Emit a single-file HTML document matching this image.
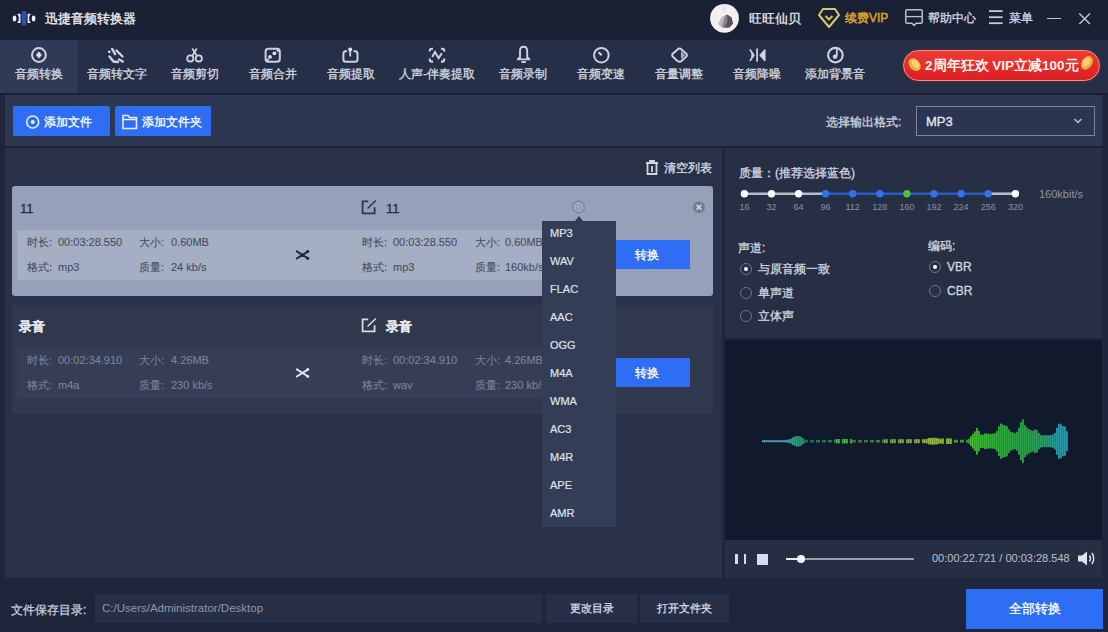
<!DOCTYPE html>
<html><head><meta charset="utf-8">
<style>
*{margin:0;padding:0;box-sizing:border-box}
html,body{width:1108px;height:632px;overflow:hidden;background:#1f263b;font-family:"Liberation Sans",sans-serif;}
.a{position:absolute}
.t{position:absolute;white-space:nowrap;line-height:1;-webkit-text-stroke-width:0.3px}
svg{position:absolute;overflow:visible}
.tab{position:absolute;top:40px;height:53px}
.tab .lbl{position:absolute;left:-10px;right:-10px;top:68px;-webkit-text-stroke:0.35px #d0d4de;text-align:center;font-size:12px;color:#d0d4de;line-height:12px;white-space:nowrap}
.bbtn{position:absolute;top:106px;height:30px;background:#2e6ef4;border-radius:2px}
.card{position:absolute;left:12px;width:701px;height:110px;border-radius:3px}
.c1{color:#464d5f;font-size:11px;-webkit-text-stroke-width:0.1px}
.c2{color:#7d8495;font-size:11px;-webkit-text-stroke-width:0.1px}
.dd{position:absolute;left:550px;font-size:11px;color:#dfe3ea;line-height:1;-webkit-text-stroke-width:0.2px}
.num{position:absolute;top:203px;font-size:9px;color:#8c92a2;width:30px;text-align:center;line-height:1}
.rad{position:absolute;width:12px;height:12px;border-radius:50%;border:1.5px solid #6e7588}
.rad.on::after{content:"";position:absolute;left:2.5px;top:2.5px;width:4px;height:4px;border-radius:50%;background:#fff}
.lt{color:#d3d7e0;font-size:12px}
</style></head><body>
<!-- backgrounds -->
<div class="a" style="left:0;top:0;width:1108px;height:40px;background:#1b2134"></div>
<div class="a" style="left:0;top:40px;width:1108px;height:53px;background:#252f47"></div>
<div class="a" style="left:0;top:40px;width:78px;height:53px;background:#2e3a56"></div>
<div class="a" style="left:0;top:93px;width:1108px;height:2px;background:#1a1f2d"></div>
<div class="a" style="left:5px;top:95px;width:1097px;height:51px;background:#2d3752"></div>
<div class="a" style="left:0;top:146px;width:1108px;height:2px;background:#1c2233"></div>
<div class="a" style="left:5px;top:148px;width:717px;height:430px;background:#283147"></div>
<div class="a" style="left:725px;top:148px;width:377px;height:190px;background:#262f44"></div>
<div class="a" style="left:725px;top:340px;width:377px;height:200px;background:#111a2c"></div>
<div class="a" style="left:725px;top:540px;width:377px;height:38px;background:#252e43"></div>

<!-- ===== title bar ===== -->
<svg style="left:0;top:0" width="40" height="40">
 <ellipse cx="14.5" cy="18.6" rx="1.8" ry="3" fill="#f2f4f8"/>
 <path d="M17.2 13.8 Q20.8 18.5 17.2 23.1 L20.5 23.1 L20.5 13.8Z" fill="#e8eaf2"/>
 <rect x="21.6" y="11" width="4.8" height="14.8" rx="2" fill="#2a4fb0"/>
 <path d="M30.8 13.8 Q27.2 18.5 30.8 23.1 L27.6 23.1 L27.6 13.8Z" fill="#e8eaf2"/>
 <ellipse cx="33.6" cy="18.6" rx="1.8" ry="3" fill="#f2f4f8"/>
</svg>
<div class="t" style="left:45px;top:12px;font-size:13px;color:#f0f2f6">迅捷音频转换器</div>

<svg style="left:700px;top:0" width="50" height="40">
 <circle cx="24.5" cy="18.3" r="14.4" fill="#f3f0f2"/>
 <path d="M24 5 V12" stroke="#d8d4d8" stroke-width="1"/>
 <path d="M18.5 24 L21.5 17.5 L27 14.5 L31.5 17.5 L33 23.5 L29.5 27.5 L22.5 27.8 Z" fill="#8a8488"/>
 <path d="M27 14.5 L31.5 17.5 L33 23.5 L29.5 27.5 L24.5 27.6 L27.5 21 Z" fill="#5a5254"/>
 <path d="M18.5 24 L21.5 17.5 L25 16 L22.5 24 L22.5 27.8Z" fill="#c0bbbf"/>
</svg>
<div class="t" style="left:749px;top:12px;font-size:13px;color:#e6e8ee">旺旺仙贝</div>
<svg style="left:810px;top:0" width="36" height="36">
 <path d="M13 9 L25 9 L29 15 L19 27 L9 15 Z" fill="none" stroke="#d6c870" stroke-width="2" stroke-linejoin="round"/>
 <path d="M15.5 16 L19 19.5 L22.5 16" fill="none" stroke="#c8cc40" stroke-width="2"/>
</svg>
<div class="t" style="left:845px;top:12px;font-size:12px;color:#d6a22a;-webkit-text-stroke-width:0.5px">续费VIP</div>
<svg style="left:900px;top:0" width="30" height="36">
 <path d="M7 9.8 H21 Q22.2 9.8 22.2 11 V22 Q22.2 23.2 21 23.2 H16.3 L14.1 25.4 L11.9 23.2 H7 Q5.8 23.2 5.8 22 V11 Q5.8 9.8 7 9.8Z" fill="none" stroke="#bcc0cc" stroke-width="1.5"/>
 <line x1="5.8" y1="16.6" x2="22.2" y2="16.6" stroke="#bcc0cc" stroke-width="1.3"/>
</svg>
<div class="t" style="left:928px;top:12px;font-size:12px;color:#d6dae3">帮助中心</div>
<svg style="left:985px;top:0" width="22" height="30">
 <rect x="4" y="10.2" width="13.6" height="1.8" fill="#c6cad6"/>
 <rect x="4" y="16.3" width="13.6" height="1.8" fill="#c6cad6"/>
 <rect x="4" y="22.3" width="13.6" height="1.8" fill="#c6cad6"/>
</svg>
<div class="t" style="left:1009px;top:12px;font-size:12px;color:#d6dae3">菜单</div>
<div class="a" style="left:1047px;top:17.5px;width:14px;height:1.5px;background:#c0c4d0"></div>
<svg style="left:1075px;top:9px" width="20" height="20">
 <path d="M4.3 4.5 L15 15 M15 4.5 L4.3 15" stroke="#c6cad6" stroke-width="1.4"/>
</svg>

<!-- ===== tabs ===== -->
<svg style="left:0;top:40px" width="880" height="30" fill="none" stroke="#cfd3df" stroke-width="2">
 <!-- 转换 -->
 <circle cx="38.9" cy="15" r="6.9"/>
 <path d="M38.9 11.6 L41.8 15 L38.9 18.4 L36 15Z" fill="#dfe3ee" stroke="none"/>
 <!-- 转文字 hand -->
 <circle cx="109.3" cy="11.8" r="1.4" fill="#cfd3df" stroke="none"/>
 <path d="M112.3 9 L115 14" stroke-width="2.6" stroke-linecap="round"/>
 <path d="M116.5 10.5 L122.5 16.5" stroke-width="2.4" stroke-linecap="round"/>
 <path d="M109.5 16.5 L113.5 21.5 L118 22 M119 19.5 L122.8 21.5" stroke-width="2.4" stroke-linecap="round"/>
 <!-- scissors -->
 <circle cx="190.3" cy="18.4" r="3.1" stroke-width="1.8"/><circle cx="198.8" cy="18.4" r="3.1" stroke-width="1.8"/>
 <path d="M192.5 15.5 L196.8 8.5 M196.6 15.5 L192.3 8.5" stroke-width="1.8"/>
 <!-- merge -->
 <rect x="265.6" y="8.8" width="14.2" height="12.9" rx="2.8"/>
 <circle cx="270" cy="16.9" r="1.9" fill="#dfe3ee" stroke="none"/><circle cx="274.4" cy="13.3" r="1.9" fill="#dfe3ee" stroke="none"/>
 <path d="M266 21.5 L268.5 19 M279.5 9 L277 11.5" stroke-width="2.2"/>
 <!-- extract -->
 <path d="M347 11.2 H345.5 Q343.4 11.2 343.4 14 V19.5 Q343.4 21.7 346 21.7 H355 Q357.5 21.7 357.5 19.5 V14 Q357.5 11.2 355.5 11.2 H353.5"/>
 <path d="M350.2 16.5 V10.5" stroke-width="1.8"/><circle cx="350.2" cy="9.4" r="2" fill="#e2e6f0" stroke="none"/>
 <!-- vocal -->
 <path d="M429.8 11.5 V10.5 Q429.8 8.8 431.8 8.8 H433 M441 8.8 H442.2 Q444.2 8.8 444.2 10.5 V11.5 M444.2 18.5 V19.8 Q444.2 21.6 442.2 21.6 H441 M433 21.6 H431.8 Q429.8 21.6 429.8 19.8 V18.5" stroke-width="2.1"/>
 <path d="M432.2 17 L435 12 L438.6 18.2 L441.8 13.2" stroke-width="2"/>
 <!-- record bell -->
 <path d="M520 17.5 V11 Q520 6.8 523.6 6.8 Q527.2 6.8 527.2 11 V17.5 Q529.3 18.2 529.3 19.4 H517.9 Q517.9 18.2 520 17.5Z" stroke-width="1.9"/>
 <path d="M521.5 22 H525.8" stroke-width="2"/>
 <!-- speed -->
 <circle cx="601.4" cy="15.2" r="7.3"/>
 <path d="M598.6 12.3 L601.6 15.3" stroke-width="2.2"/>
 <!-- volume -->
 <path d="M679.5 8.5 Q680.5 8.5 681.5 9.5 L686.5 14 Q687.3 15.2 686.5 16.4 L681.5 21 Q679.5 22.6 677.5 21 L672.5 16.4 Q671.7 15.2 672.5 14 L677.5 9.5 Q678.5 8.5 679.5 8.5Z"/>
 <path d="M681 11 L685 15.2 L681 19.5Z" fill="#aab0c0" stroke="none"/>
 <!-- denoise -->
 <path d="M757.1 8.5 V21.8" stroke-width="1.7"/>
 <path d="M750.2 10 Q754.5 15.2 750.2 20.5 L753.8 15.2Z" fill="#cfd3df" stroke="#cfd3df" stroke-width="1.6" stroke-linejoin="round"/>
 <path d="M764.8 10 L760.2 15.2 L764.8 20.5Z" fill="#cfd3df" stroke="#cfd3df" stroke-width="1.6" stroke-linejoin="round"/>
 <!-- bg music -->
 <circle cx="835.4" cy="15.2" r="7.3" stroke-width="2.1"/>
 <path d="M836.8 9 V16.5" stroke-width="1.8"/><circle cx="835" cy="16.8" r="2.2" fill="#cfd3df" stroke="none"/>
</svg>
<div class="tab" style="left:0;width:78px"><div class="lbl" style="top:28px">音频转换</div></div>
<div class="tab" style="left:78px;width:78px"><div class="lbl" style="top:28px">音频转文字</div></div>
<div class="tab" style="left:156px;width:78px"><div class="lbl" style="top:28px">音频剪切</div></div>
<div class="tab" style="left:234px;width:78px"><div class="lbl" style="top:28px">音频合并</div></div>
<div class="tab" style="left:312px;width:78px"><div class="lbl" style="top:28px">音频提取</div></div>
<div class="tab" style="left:390px;width:94px"><div class="lbl" style="top:28px">人声-伴奏提取</div></div>
<div class="tab" style="left:484px;width:78px"><div class="lbl" style="top:28px">音频录制</div></div>
<div class="tab" style="left:562px;width:78px"><div class="lbl" style="top:28px">音频变速</div></div>
<div class="tab" style="left:640px;width:78px"><div class="lbl" style="top:28px">音量调整</div></div>
<div class="tab" style="left:718px;width:78px"><div class="lbl" style="top:28px">音频降噪</div></div>
<div class="tab" style="left:796px;width:78px"><div class="lbl" style="top:28px">添加背景音</div></div>

<!-- VIP pill -->
<div class="a" style="left:903px;top:50px;width:197px;height:31px;border-radius:16px;background:linear-gradient(#ef3a34,#dc1f25);border:1.5px solid #f3927e;box-shadow:0 0 2px #a03030"></div>
<svg style="left:903px;top:50px" width="200" height="32">
 <ellipse cx="11.6" cy="14.6" rx="5.2" ry="7.2" transform="rotate(-40 11.6 14.6)" fill="#eeb03a"/>
 <ellipse cx="12.4" cy="13.8" rx="3" ry="5" transform="rotate(-40 12.4 13.8)" fill="#f7d47a"/>
 <ellipse cx="183.9" cy="12.8" rx="5.2" ry="7.4" transform="rotate(35 183.9 12.8)" fill="#eeb03a"/>
 <ellipse cx="183.2" cy="12.2" rx="3" ry="5" transform="rotate(35 183.2 12.2)" fill="#f7d47a"/>
</svg>
<div class="t" style="left:925px;top:59px;font-size:13.5px;font-weight:bold;color:#fff4ec;-webkit-text-stroke-width:0">2周年狂欢 VIP立减100元</div>

<!-- ===== toolbar row ===== -->
<div class="bbtn" style="left:13px;width:97px"></div>
<div class="bbtn" style="left:115px;width:96px"></div>
<svg style="left:0;top:100px" width="220" height="40" fill="none" stroke="#e8eefc" stroke-width="1.6">
 <circle cx="32.7" cy="22" r="6"/><circle cx="32.7" cy="22" r="2" fill="#e8eefc" stroke="none"/>
 <path d="M123 15.5 H128 L129.5 17.5 H136.5 V28.5 H123 Z M123 19.5 H136.5"/>
</svg>
<div class="t" style="left:44px;top:116px;font-size:12px;color:#fff">添加文件</div>
<div class="t" style="left:142px;top:116px;font-size:12px;color:#fff">添加文件夹</div>
<div class="t" style="left:826px;top:116px;font-size:12px;color:#d0d4de">选择输出格式:</div>
<div class="a" style="left:916px;top:106px;width:179px;height:30px;border:1.5px solid #7a859c;background:#2b3450"></div>
<div class="t" style="left:926px;top:115px;font-size:13px;color:#e6e9f0">MP3</div>
<svg style="left:1070px;top:114px" width="16" height="12"><path d="M4.5 5 L8 8.5 L11.5 5" fill="none" stroke="#c0c4d0" stroke-width="1.5"/></svg>

<!-- ===== list ===== -->
<svg style="left:640px;top:155px" width="24" height="26" fill="none" stroke="#d0d4de" stroke-width="1.8">
 <path d="M7.5 9 V19 H16.5 V9 M6 8 H18 M10 7 V6 H14 V7 M12 11 V17"/>
</svg>
<div class="t" style="left:664px;top:162px;font-size:12px;color:#d8dce4">清空列表</div>

<!-- card 1 -->
<div class="card" style="top:186px;background:#96a1b9"></div>
<div class="a" style="left:17px;top:230px;width:560px;height:50px;background:#a5afc3"></div>
<div class="t" style="left:20px;top:202px;font-size:13px;color:#262c3c">11</div>
<div class="t c1" style="left:27px;top:237px">时长: </div><div class="t c1" style="left:58px;top:237px">00:03:28.550</div>
<div class="t c1" style="left:139px;top:237px">大小: </div><div class="t c1" style="left:171px;top:237px">0.60MB</div>
<div class="t c1" style="left:27px;top:262px">格式: </div><div class="t c1" style="left:58px;top:262px">mp3</div>
<div class="t c1" style="left:139px;top:262px">质量: </div><div class="t c1" style="left:171px;top:262px">24 kb/s</div>
<svg style="left:290px;top:245px" width="26" height="20" fill="none" stroke="#20263a" stroke-linecap="round">
 <path d="M6.8 6.3 L18.2 13.5 M6.8 13.5 L18.2 6.3" stroke-width="2"/>
 <circle cx="17.6" cy="6.6" r="1.5" fill="#20263a" stroke="none"/><circle cx="17.6" cy="13.2" r="1.5" fill="#20263a" stroke="none"/>
</svg>
<svg style="left:355px;top:195px" width="26" height="26" fill="none" stroke="#30364a" stroke-width="1.8">
 <path d="M13.2 6.3 H7.6 V18.4 H19.6 V12.2"/><path d="M12.5 13.5 L20.8 5.5" stroke-width="1.6"/>
</svg>
<div class="t" style="left:386px;top:202px;font-size:13px;color:#262c3c">11</div>
<div class="t c1" style="left:362px;top:237px">时长: </div><div class="t c1" style="left:393px;top:237px">00:03:28.550</div>
<div class="t c1" style="left:475px;top:237px">大小: </div><div class="t c1" style="left:505px;top:237px">0.60MB</div>
<div class="t c1" style="left:362px;top:262px">格式: </div><div class="t c1" style="left:393px;top:262px">mp3</div>
<div class="t c1" style="left:475px;top:262px">质量: </div><div class="t c1" style="left:505px;top:262px">160kb/s</div>
<svg style="left:570px;top:198px" width="20" height="20">
 <path d="M8.6 2.6 L14 5.8 V12 L8.6 15.2 L3.2 12 V5.8 Z" fill="#a3abbd" stroke="#7a8398" stroke-width="1.3"/>
 <rect x="6.6" y="6.8" width="4" height="4.5" fill="none" stroke="#8d95a8" stroke-width="0.8"/>
</svg>
<svg style="left:690px;top:199px" width="18" height="18">
 <circle cx="9" cy="8.3" r="6" fill="#757c8e"/>
 <path d="M6.6 5.9 L11.4 10.7 M11.4 5.9 L6.6 10.7" stroke="#cdd1dc" stroke-width="1.7"/>
</svg>

<!-- card 2 -->
<div class="card" style="top:302px;height:112px;background:linear-gradient(#2a3246 0px,#30384e 6px,#31394f 100%)"></div>
<div class="a" style="left:17px;top:347px;width:545px;height:51px;background:#353e55"></div>
<div class="t" style="left:19px;top:320px;font-size:13px;color:#e2e5ec;font-weight:bold">录音</div>
<div class="t c2" style="left:27px;top:355px">时长: </div><div class="t c2" style="left:58px;top:355px">00:02:34.910</div>
<div class="t c2" style="left:139px;top:355px">大小: </div><div class="t c2" style="left:171px;top:355px">4.26MB</div>
<div class="t c2" style="left:27px;top:380px">格式: </div><div class="t c2" style="left:58px;top:380px">m4a</div>
<div class="t c2" style="left:139px;top:380px">质量: </div><div class="t c2" style="left:171px;top:380px">230 kb/s</div>
<svg style="left:290px;top:363px" width="26" height="20" fill="none" stroke="#dfe3ea" stroke-linecap="round">
 <path d="M6.8 6.3 L18.2 13.5 M6.8 13.5 L18.2 6.3" stroke-width="2"/>
 <circle cx="17.6" cy="6.6" r="1.5" fill="#dfe3ea" stroke="none"/><circle cx="17.6" cy="13.2" r="1.5" fill="#dfe3ea" stroke="none"/>
</svg>
<svg style="left:355px;top:313px" width="26" height="26" fill="none" stroke="#d6dae3" stroke-width="1.8">
 <path d="M13.2 6.3 H7.6 V18.4 H19.6 V12.2"/><path d="M12.5 13.5 L20.8 5.5" stroke-width="1.6"/>
</svg>
<div class="t" style="left:386px;top:320px;font-size:13px;color:#e2e5ec;font-weight:bold">录音</div>
<div class="t c2" style="left:362px;top:355px">时长: </div><div class="t c2" style="left:393px;top:355px">00:02:34.910</div>
<div class="t c2" style="left:475px;top:355px">大小: </div><div class="t c2" style="left:505px;top:355px">4.26MB</div>
<div class="t c2" style="left:362px;top:380px">格式: </div><div class="t c2" style="left:393px;top:380px">wav</div>
<div class="t c2" style="left:475px;top:380px">质量: </div><div class="t c2" style="left:505px;top:380px">230 kb/s</div>

<!-- convert buttons -->
<div class="a" style="left:603px;top:240px;width:87px;height:29px;background:#2e6ef4"></div>
<div class="t" style="left:635px;top:249px;font-size:12px;color:#fff">转换</div>
<div class="a" style="left:603px;top:358px;width:87px;height:29px;background:#2e6ef4"></div>
<div class="t" style="left:635px;top:367px;font-size:12px;color:#fff">转换</div>

<!-- dropdown -->
<svg style="left:570px;top:212px" width="20" height="10"><path d="M5 9 L9 4 L13 9Z" fill="#333d56"/></svg>
<div class="a" style="left:542px;top:221px;width:74px;height:306px;background:#333d56"></div>
<div class="dd" style="top:228px">MP3</div>
<div class="dd" style="top:256px">WAV</div>
<div class="dd" style="top:284px">FLAC</div>
<div class="dd" style="top:312px">AAC</div>
<div class="dd" style="top:340px">OGG</div>
<div class="dd" style="top:368px">M4A</div>
<div class="dd" style="top:396px">WMA</div>
<div class="dd" style="top:424px">AC3</div>
<div class="dd" style="top:452px">M4R</div>
<div class="dd" style="top:480px">APE</div>
<div class="dd" style="top:508px">AMR</div>

<!-- ===== right settings ===== -->
<div class="t lt" style="left:739px;top:167px">质量：(推荐选择蓝色)</div>
<svg style="left:0;top:0" width="1108" height="632">
 <line x1="744.4" y1="193.7" x2="825.6" y2="193.7" stroke="#b8bcc8" stroke-width="2.6"/>
 <line x1="825.6" y1="193.7" x2="988.2" y2="193.7" stroke="#2a5cc0" stroke-width="2.6"/>
 <line x1="988.2" y1="193.7" x2="1015.4" y2="193.7" stroke="#b8bcc8" stroke-width="2.6"/>
 <g fill="#ffffff"><circle cx="744.4" cy="193.7" r="3.7"/><circle cx="771.5" cy="193.7" r="3.7"/><circle cx="798.6" cy="193.7" r="3.7"/><circle cx="1015.4" cy="193.7" r="3.7"/></g>
 <g fill="#2f72f2"><circle cx="825.6" cy="193.7" r="3.7"/><circle cx="852.7" cy="193.7" r="3.7"/><circle cx="879.8" cy="193.7" r="3.7"/><circle cx="934" cy="193.7" r="3.7"/><circle cx="961.1" cy="193.7" r="3.7"/><circle cx="988.2" cy="193.7" r="3.7"/></g>
 <circle cx="906.9" cy="193.7" r="3.7" fill="#4cc43a"/>
</svg>
<div class="num" style="left:729.4px">16</div>
<div class="num" style="left:756.5px">32</div>
<div class="num" style="left:783.6px">64</div>
<div class="num" style="left:810.6px">96</div>
<div class="num" style="left:837.7px">112</div>
<div class="num" style="left:864.8px">128</div>
<div class="num" style="left:891.9px">160</div>
<div class="num" style="left:919px">192</div>
<div class="num" style="left:946.1px">224</div>
<div class="num" style="left:973.2px">256</div>
<div class="num" style="left:1000.4px">320</div>
<div class="t" style="left:1039px;top:189px;font-size:11px;color:#8e94a4;-webkit-text-stroke-width:0">160kbit/s</div>

<div class="t lt" style="left:738px;top:242px">声道:</div>
<div class="rad on" style="left:740px;top:263px"></div><div class="t lt" style="left:758px;top:263px">与原音频一致</div>
<div class="rad" style="left:740px;top:286.5px"></div><div class="t lt" style="left:758px;top:287px">单声道</div>
<div class="rad" style="left:740px;top:310px"></div><div class="t lt" style="left:758px;top:310px">立体声</div>
<div class="t lt" style="left:928px;top:240px">编码:</div>
<div class="rad on" style="left:929px;top:261px"></div><div class="t lt" style="left:947px;top:261px">VBR</div>
<div class="rad" style="left:929px;top:285px"></div><div class="t lt" style="left:947px;top:285px">CBR</div>

<!-- waveform -->
<svg style="left:0;top:0" width="1108" height="632">
 <defs><linearGradient id="wg" gradientUnits="userSpaceOnUse" x1="762" y1="0" x2="1068" y2="0">
  <stop offset="0" stop-color="#5aa6cc"/><stop offset="0.08" stop-color="#4a9eb8"/><stop offset="0.115" stop-color="#2a9c6c"/><stop offset="0.16" stop-color="#348c68"/><stop offset="0.25" stop-color="#40ae44"/><stop offset="0.40" stop-color="#6cae40"/><stop offset="0.52" stop-color="#9cba40"/><stop offset="0.60" stop-color="#82b83a"/><stop offset="0.70" stop-color="#40b634"/><stop offset="0.78" stop-color="#2ea83c"/><stop offset="0.86" stop-color="#2aa04a"/><stop offset="0.92" stop-color="#2a9c62"/><stop offset="0.96" stop-color="#2a98a0"/><stop offset="1" stop-color="#2a96b0"/>
 </linearGradient></defs>
 <g fill="url(#wg)"><rect x="762.0" y="440.2" width="1.8" height="2.0"/><rect x="764.0" y="440.2" width="1.8" height="2.0"/><rect x="766.0" y="440.2" width="1.8" height="2.0"/><rect x="768.0" y="440.2" width="1.8" height="2.0"/><rect x="770.0" y="440.2" width="1.8" height="2.0"/><rect x="772.0" y="440.2" width="1.8" height="2.0"/><rect x="774.0" y="440.2" width="1.8" height="2.0"/><rect x="776.0" y="440.2" width="1.8" height="2.0"/><rect x="778.0" y="440.2" width="1.8" height="2.0"/><rect x="780.0" y="440.2" width="1.8" height="2.0"/><rect x="782.0" y="440.2" width="1.8" height="2.0"/><rect x="784.0" y="440.1" width="1.8" height="2.2"/><rect x="786.0" y="439.8" width="1.8" height="2.7"/><rect x="788.0" y="439.4" width="1.8" height="3.6"/><rect x="790.0" y="438.7" width="1.8" height="4.9"/><rect x="792.0" y="437.4" width="1.8" height="7.5"/><rect x="794.0" y="436.4" width="1.8" height="9.5"/><rect x="796.0" y="435.9" width="1.8" height="10.7"/><rect x="798.0" y="436.1" width="1.8" height="10.2"/><rect x="800.0" y="436.7" width="1.8" height="9.1"/><rect x="802.0" y="438.3" width="1.8" height="5.8"/><rect x="804.0" y="439.5" width="1.8" height="3.4" fill-opacity="0.75"/><rect x="806.0" y="439.9" width="1.8" height="2.6" fill-opacity="0.75"/><rect x="810.0" y="439.9" width="1.8" height="2.6" fill-opacity="0.75"/><rect x="812.0" y="439.9" width="1.8" height="2.6" fill-opacity="0.75"/><rect x="816.0" y="439.9" width="1.8" height="2.6" fill-opacity="0.75"/><rect x="818.0" y="439.9" width="1.8" height="2.6" fill-opacity="0.75"/><rect x="822.0" y="439.9" width="1.8" height="2.6" fill-opacity="0.75"/><rect x="824.0" y="439.9" width="1.8" height="2.6" fill-opacity="0.75"/><rect x="828.0" y="439.9" width="1.8" height="2.6" fill-opacity="0.75"/><rect x="830.0" y="439.9" width="1.8" height="2.6" fill-opacity="0.75"/><rect x="834.0" y="439.5" width="1.8" height="3.4" fill-opacity="0.75"/><rect x="836.0" y="439.0" width="1.8" height="4.4"/><rect x="838.0" y="439.0" width="1.8" height="4.4"/><rect x="842.0" y="439.0" width="1.8" height="4.4"/><rect x="844.0" y="439.0" width="1.8" height="4.4"/><rect x="846.0" y="439.0" width="1.8" height="4.4"/><rect x="850.0" y="439.0" width="1.8" height="4.4"/><rect x="852.0" y="439.9" width="1.8" height="2.7" fill-opacity="0.7"/><rect x="854.0" y="439.9" width="1.8" height="2.6" fill-opacity="0.7"/><rect x="858.0" y="439.9" width="1.8" height="2.6" fill-opacity="0.7"/><rect x="860.0" y="439.9" width="1.8" height="2.6" fill-opacity="0.7"/><rect x="864.0" y="439.9" width="1.8" height="2.6" fill-opacity="0.7"/><rect x="866.0" y="439.9" width="1.8" height="2.6" fill-opacity="0.7"/><rect x="870.0" y="439.9" width="1.8" height="2.6" fill-opacity="0.7"/><rect x="872.0" y="439.9" width="1.8" height="2.6" fill-opacity="0.7"/><rect x="876.0" y="439.9" width="1.8" height="2.6" fill-opacity="0.7"/><rect x="878.0" y="439.9" width="1.8" height="2.6" fill-opacity="0.7"/><rect x="882.0" y="439.6" width="1.8" height="3.2" fill-opacity="0.7"/><rect x="884.0" y="439.2" width="1.8" height="4.0" fill-opacity="0.9"/><rect x="886.0" y="439.2" width="1.8" height="4.0" fill-opacity="0.9"/><rect x="890.0" y="439.2" width="1.8" height="4.0" fill-opacity="0.9"/><rect x="892.0" y="439.2" width="1.8" height="4.0" fill-opacity="0.9"/><rect x="894.0" y="439.2" width="1.8" height="4.0" fill-opacity="0.9"/><rect x="898.0" y="439.2" width="1.8" height="4.0" fill-opacity="0.9"/><rect x="900.0" y="439.2" width="1.8" height="4.0" fill-opacity="0.9"/><rect x="902.0" y="439.2" width="1.8" height="4.0" fill-opacity="0.9"/><rect x="906.0" y="439.2" width="1.8" height="4.0" fill-opacity="0.9"/><rect x="908.0" y="439.2" width="1.8" height="4.0" fill-opacity="0.9"/><rect x="910.0" y="439.2" width="1.8" height="4.0" fill-opacity="0.9"/><rect x="914.0" y="439.2" width="1.8" height="4.0" fill-opacity="0.9"/><rect x="916.0" y="439.2" width="1.8" height="4.0" fill-opacity="0.9"/><rect x="918.0" y="439.2" width="1.8" height="4.0" fill-opacity="0.9"/><rect x="922.0" y="439.2" width="1.8" height="4.0" fill-opacity="0.9"/><rect x="924.0" y="439.2" width="1.8" height="4.0" fill-opacity="0.9"/><rect x="926.0" y="438.8" width="1.8" height="4.7" fill-opacity="0.9"/><rect x="928.0" y="438.0" width="1.8" height="6.3"/><rect x="930.0" y="437.9" width="1.8" height="6.7"/><rect x="932.0" y="437.7" width="1.8" height="7.0"/><rect x="934.0" y="437.8" width="1.8" height="6.7"/><rect x="936.0" y="438.0" width="1.8" height="6.4"/><rect x="938.0" y="438.6" width="1.8" height="5.1"/><rect x="940.0" y="438.7" width="1.8" height="4.9"/><rect x="942.0" y="438.4" width="1.8" height="5.6"/><rect x="946.0" y="438.4" width="1.8" height="5.6"/><rect x="948.0" y="438.4" width="1.8" height="5.6"/><rect x="950.0" y="438.4" width="1.8" height="5.6"/><rect x="954.0" y="439.8" width="1.8" height="2.8" fill-opacity="0.8"/><rect x="956.0" y="439.8" width="1.8" height="2.9" fill-opacity="0.8"/><rect x="960.0" y="439.7" width="1.8" height="2.9" fill-opacity="0.8"/><rect x="962.0" y="439.7" width="1.8" height="2.9" fill-opacity="0.8"/><rect x="966.0" y="439.7" width="1.8" height="3.0" fill-opacity="0.8"/><rect x="968.0" y="438.8" width="1.8" height="4.9" fill-opacity="0.8"/><rect x="970.0" y="436.4" width="1.8" height="9.6"/><rect x="972.0" y="434.0" width="1.8" height="14.5"/><rect x="974.0" y="431.5" width="1.8" height="19.4"/><rect x="976.0" y="427.9" width="1.8" height="26.7"/><rect x="978.0" y="431.0" width="1.8" height="20.4"/><rect x="980.0" y="434.4" width="1.8" height="13.7"/><rect x="982.0" y="434.7" width="1.8" height="13.1"/><rect x="984.0" y="433.5" width="1.8" height="15.5"/><rect x="986.0" y="433.5" width="1.8" height="15.3"/><rect x="988.0" y="433.9" width="1.8" height="14.5"/><rect x="990.0" y="433.9" width="1.8" height="14.6"/><rect x="992.0" y="433.7" width="1.8" height="15.0"/><rect x="994.0" y="433.3" width="1.8" height="15.8"/><rect x="996.0" y="431.1" width="1.8" height="20.3"/><rect x="998.0" y="426.3" width="1.8" height="29.9"/><rect x="1000.0" y="423.6" width="1.8" height="35.1"/><rect x="1002.0" y="424.8" width="1.8" height="32.8"/><rect x="1004.0" y="425.4" width="1.8" height="31.6"/><rect x="1006.0" y="426.1" width="1.8" height="30.2"/><rect x="1008.0" y="429.3" width="1.8" height="23.7"/><rect x="1010.0" y="431.8" width="1.8" height="18.7"/><rect x="1012.0" y="432.5" width="1.8" height="17.4"/><rect x="1014.0" y="433.3" width="1.8" height="15.8"/><rect x="1016.0" y="431.9" width="1.8" height="18.6"/><rect x="1018.0" y="427.6" width="1.8" height="27.2"/><rect x="1020.0" y="422.0" width="1.8" height="38.3"/><rect x="1022.0" y="419.4" width="1.8" height="43.7"/><rect x="1024.0" y="425.1" width="1.8" height="32.1"/><rect x="1026.0" y="427.5" width="1.8" height="27.4"/><rect x="1028.0" y="429.1" width="1.8" height="24.3"/><rect x="1030.0" y="430.1" width="1.8" height="22.3"/><rect x="1032.0" y="430.9" width="1.8" height="20.7"/><rect x="1034.0" y="429.5" width="1.8" height="23.4"/><rect x="1036.0" y="429.8" width="1.8" height="22.8"/><rect x="1038.0" y="433.1" width="1.8" height="16.2"/><rect x="1040.0" y="434.9" width="1.8" height="12.7"/><rect x="1042.0" y="435.3" width="1.8" height="11.9"/><rect x="1044.0" y="435.2" width="1.8" height="12.0"/><rect x="1046.0" y="435.2" width="1.8" height="12.0"/><rect x="1048.0" y="435.2" width="1.8" height="12.0"/><rect x="1050.0" y="435.2" width="1.8" height="12.0"/><rect x="1052.0" y="434.5" width="1.8" height="13.4"/><rect x="1054.0" y="432.9" width="1.8" height="16.6"/><rect x="1056.0" y="427.8" width="1.8" height="26.9"/><rect x="1058.0" y="423.6" width="1.8" height="35.2"/><rect x="1060.0" y="424.3" width="1.8" height="33.9"/><rect x="1062.0" y="426.1" width="1.8" height="30.1"/><rect x="1064.0" y="426.5" width="1.8" height="29.3"/><rect x="1066.0" y="431.2" width="1.8" height="20.0"/></g>
</svg>

<!-- player -->
<div class="a" style="left:735px;top:554px;width:2.7px;height:10px;background:#d8dcf0"></div>
<div class="a" style="left:743.6px;top:554px;width:2.7px;height:10px;background:#d8dcf0"></div>
<div class="a" style="left:757px;top:554px;width:11px;height:11px;background:#d8dcf0"></div>
<div class="a" style="left:786px;top:558.2px;width:128px;height:1.7px;background:#9a9eaa"></div>
<div class="a" style="left:786px;top:558px;width:14px;height:2px;background:#e8eaf2"></div>
<div class="a" style="left:796.8px;top:555px;width:8px;height:8px;border-radius:50%;background:#fff"></div>
<div class="t" style="left:932px;top:553px;font-size:11px;color:#bcc1cd;-webkit-text-stroke-width:0">00:00:22.721 / 00:03:28.548</div>
<svg style="left:1075px;top:548px" width="24" height="22">
 <path d="M3 7.5 H7 L12 3.5 V17.5 L7 13.5 H3Z" fill="#dfe3ee"/>
 <path d="M14.5 7.5 Q16.5 10.5 14.5 13.5 M17 5 Q20.5 10.5 17 16" fill="none" stroke="#dfe3ee" stroke-width="1.5"/>
</svg>

<!-- ===== bottom ===== -->
<div class="t" style="left:11px;top:604px;font-size:12px;color:#c8ccd6">文件保存目录:</div>
<div class="a" style="left:95px;top:594px;width:447px;height:29px;background:#262f45"></div>
<div class="t" style="left:102px;top:603px;font-size:11.5px;color:#9098a8;-webkit-text-stroke-width:0">C:/Users/Administrator/Desktop</div>
<div class="a" style="left:546px;top:594px;width:91px;height:29px;background:#262f45"></div>
<div class="t" style="left:546px;width:91px;text-align:center;top:603px;font-size:11px;color:#d6dae2">更改目录</div>
<div class="a" style="left:640px;top:594px;width:89px;height:29px;background:#262f45"></div>
<div class="t" style="left:640px;width:89px;text-align:center;top:603px;font-size:11px;color:#d6dae2">打开文件夹</div>
<div class="a" style="left:966px;top:589px;width:137px;height:40px;background:#2e6ef4"></div>
<div class="t" style="left:1009px;top:602px;font-size:13px;color:#fff">全部转换</div>
</body></html>
